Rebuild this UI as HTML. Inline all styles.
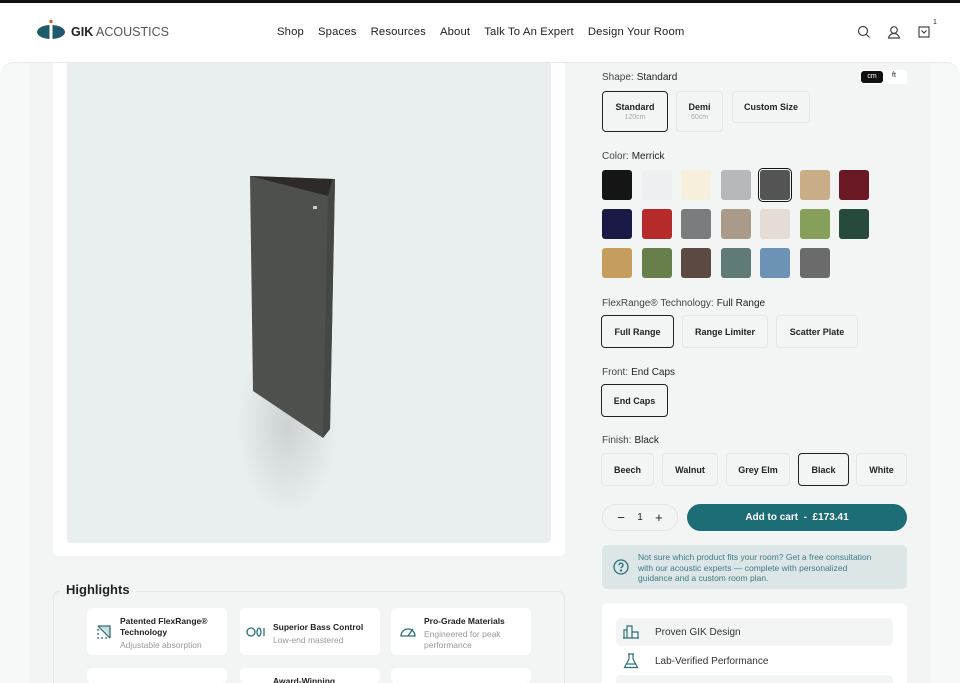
<!DOCTYPE html>
<html style="overflow:hidden;width:960px;height:683px"><head><meta charset="utf-8"><style>
*{box-sizing:border-box;margin:0;padding:0}
body{width:960px;height:683px;overflow:hidden;background:#fff;font-family:"Liberation Sans",sans-serif;color:#222;position:relative}
.a{position:absolute}
.nav span{margin-right:14px}
.btn{position:absolute;border:1px solid #e6e8e8;border-radius:4px;background:#f3f5f5;font-size:9px;font-weight:bold;text-align:center;display:flex;flex-direction:column;justify-content:center;align-items:center;color:#222}
.sel{border:1.5px solid #222}
.lbl{position:absolute;font-size:10px;color:#444}
.lbl b{color:#222;font-weight:normal;margin-left:3px}
.sw{position:absolute;width:30px;height:30px;border-radius:3px}
.hi{position:absolute;background:#fff;border-radius:5px;width:140px;height:47px}
.hi .t{position:absolute;left:33px;font-size:8.5px;font-weight:bold;color:#222;line-height:11px}
.hi .s{position:absolute;left:33px;font-size:8.5px;color:#999;line-height:11px}
</style></head><body>
<div class="a" style="left:0;top:0;width:960px;height:3px;background:#111"></div>
<svg class="a" style="left:36px;top:19px" width="34" height="22" viewBox="0 0 34 22"><ellipse cx="15" cy="13" rx="14" ry="7" fill="#1f5a6b"/><rect x="13.5" y="5" width="3" height="17" fill="#fff"/><circle cx="15" cy="2.5" r="1.7" fill="#c4662a"/></svg>
<div class="a" style="left:71px;top:25px;font-size:12.5px;color:#333"><b style="color:#222">GIK</b> <span style="color:#555">ACOUSTICS</span></div>
<div class="a nav" style="left:277px;top:26px;font-size:11.3px;color:#222;white-space:nowrap;letter-spacing:0.15px"><span>Shop</span><span>Spaces</span><span>Resources</span><span>About</span><span>Talk To An Expert</span><span>Design Your Room</span></div>
<svg class="a" style="left:856px;top:25px" width="80" height="16" viewBox="0 0 80 16" fill="none" stroke="#444" stroke-width="1.2"><circle cx="7" cy="6" r="4.5"/><path d="M10.5 9.5l3 3"/><circle cx="38" cy="5" r="3.3"/><path d="M32.5 13c1-3.5 3-4.5 5.5-4.5s4.5 1 5.5 4.5z"/><rect x="63" y="2" width="10" height="10"/><path d="M65.5 5.5l2.5 2.5 2.5-2.5"/></svg>
<div class="a" style="left:933px;top:19px;font-size:7px">1</div>
<div class="a" style="left:0;top:62px;width:960px;height:621px;background:#f7f8f8;border-radius:14px 14px 0 0;border-top:1px solid #e8eaea"></div>
<div class="a" style="left:29px;top:63px;width:902px;height:620px;background:#f3f5f5"></div>
<div class="a" style="left:53px;top:63px;width:512px;height:493px;background:#fff;border-radius:0 0 5px 5px"></div>
<div class="a" style="left:67px;top:63px;width:484px;height:480px;background:#e9eeee;border-radius:0 0 4px 4px;overflow:hidden">
<div class="a" style="left:165px;top:310px;width:110px;height:150px;background:radial-gradient(ellipse at 50% 35%,rgba(0,0,0,0.12),rgba(0,0,0,0) 65%)"></div>
<svg class="a" style="left:183px;top:113px" width="90" height="262" viewBox="0 0 90 262"><polygon points="0,0 83,3 85,3 80,253 73,262 3,215" fill="#4e504d"/><polygon points="73,262 80,253 85,3 78,20" fill="#454744"/><polygon points="0,0 83,3 78,20" fill="#2e2a2a"/><rect x="63" y="30" width="4" height="3" fill="#ccc"/></svg>
</div>
<div class="a" style="left:53px;top:591px;width:512px;height:100px;border:1px solid #e4e7e7;border-radius:6px"></div>
<div class="a" style="left:60px;top:582px;background:#f3f5f5;padding:0 6px;font-size:13px;font-weight:bold;color:#222">Highlights</div>
<div class="hi" style="left:87px;top:608px"><svg class="a" style="left:9px;top:16px" width="16" height="16" viewBox="0 0 16 16" fill="none" stroke="#2a6f79" stroke-width="1.3"><path d="M2 2h12v12" /><path d="M2 2l12 12" /><path d="M2 5v9h9" stroke-dasharray="2 2"/><path d="M4 2l10 10V2z" fill="#2a6f79" opacity=".25" stroke="none"/></svg><div class="t" style="top:8px">Patented FlexRange®<br>Technology</div><div class="s" style="top:32px">Adjustable absorption</div></div>
<div class="hi" style="left:240px;top:608px"><svg class="a" style="left:6px;top:18px" width="20" height="12" viewBox="0 0 20 12" fill="none" stroke="#2a6f79" stroke-width="1.3"><circle cx="5" cy="6" r="4"/><ellipse cx="13" cy="6" rx="2" ry="4"/><path d="M18 2v8"/></svg><div class="t" style="top:14px">Superior Bass Control</div><div class="s" style="top:27px">Low-end mastered</div></div>
<div class="hi" style="left:391px;top:608px"><svg class="a" style="left:8px;top:16px" width="18" height="14" viewBox="0 0 18 14" fill="none" stroke="#2a6f79" stroke-width="1.3"><path d="M2 12A7 7 0 0 1 16 12z"/><path d="M9 12l5-7"/></svg><div class="t" style="top:8px">Pro-Grade Materials</div><div class="s" style="top:21px">Engineered for peak<br>performance</div></div>
<div class="hi" style="left:87px;top:668px;height:15px"></div>
<div class="hi" style="left:240px;top:668px;height:15px"><div class="t" style="top:8px">Award-Winning</div></div>
<div class="hi" style="left:391px;top:668px;height:15px"></div>
<div class="lbl" style="left:602px;top:72px">Shape:<b>Standard</b></div>
<div class="a" style="left:860px;top:70px;width:47px;height:14px;background:#fff;border-radius:3px"></div>
<div class="a" style="left:861px;top:71px;width:22px;height:12px;background:#111;border-radius:3px;color:#fff;font-size:7px;text-align:center;line-height:12px">cm</div>
<div class="a" style="left:892px;top:72px;font-size:7px">ft</div>
<div class="btn sel" style="left:602px;top:91px;width:66px;height:41px">Standard<span style="font-weight:normal;color:#aaa;font-size:7px;margin-top:2px">120cm</span></div>
<div class="btn" style="left:676px;top:91px;width:47px;height:41px">Demi<span style="font-weight:normal;color:#aaa;font-size:7px;margin-top:2px">60cm</span></div>
<div class="btn" style="left:732px;top:91px;width:78px;height:32px">Custom Size</div>
<div class="lbl" style="left:602px;top:151px">Color:<b>Merrick</b></div>
<div class="sw" style="left:602px;top:170px;background:#151515"></div>
<div class="sw" style="left:642px;top:170px;background:#eeeff0"></div>
<div class="sw" style="left:681px;top:170px;background:#f6efdb"></div>
<div class="sw" style="left:721px;top:170px;background:#b7b8bb"></div>
<div class="sw" style="left:760px;top:170px;background:#545454;outline:1.5px solid #111;outline-offset:1px"></div>
<div class="sw" style="left:800px;top:170px;background:#c8ad86"></div>
<div class="sw" style="left:839px;top:170px;background:#6a1823"></div>
<div class="sw" style="left:602px;top:209px;background:#181a45"></div>
<div class="sw" style="left:642px;top:209px;background:#b72a2a"></div>
<div class="sw" style="left:681px;top:209px;background:#7b7c7e"></div>
<div class="sw" style="left:721px;top:209px;background:#a99a89"></div>
<div class="sw" style="left:760px;top:209px;background:#e6dcd6"></div>
<div class="sw" style="left:800px;top:209px;background:#869f5a"></div>
<div class="sw" style="left:839px;top:209px;background:#264b3d"></div>
<div class="sw" style="left:602px;top:248px;background:#c59d5c"></div>
<div class="sw" style="left:642px;top:248px;background:#687f4c"></div>
<div class="sw" style="left:681px;top:248px;background:#5c4a42"></div>
<div class="sw" style="left:721px;top:248px;background:#5f7a77"></div>
<div class="sw" style="left:760px;top:248px;background:#6c93b6"></div>
<div class="sw" style="left:800px;top:248px;background:#6b6b6b"></div>
<div class="lbl" style="left:602px;top:298px">FlexRange® Technology:<b>Full Range</b></div>
<div class="btn sel" style="left:601px;top:315px;width:73px;height:33px">Full Range</div>
<div class="btn" style="left:682px;top:315px;width:86px;height:33px">Range Limiter</div>
<div class="btn" style="left:776px;top:315px;width:82px;height:33px">Scatter Plate</div>
<div class="lbl" style="left:602px;top:367px">Front:<b>End Caps</b></div>
<div class="btn sel" style="left:601px;top:384px;width:67px;height:33px">End Caps</div>
<div class="lbl" style="left:602px;top:435px">Finish:<b>Black</b></div>
<div class="btn" style="left:601px;top:453px;width:53px;height:33px">Beech</div>
<div class="btn" style="left:662px;top:453px;width:56px;height:33px">Walnut</div>
<div class="btn" style="left:726px;top:453px;width:64px;height:33px">Grey Elm</div>
<div class="btn sel" style="left:798px;top:453px;width:51px;height:33px">Black</div>
<div class="btn" style="left:856px;top:453px;width:51px;height:33px">White</div>
<div class="a" style="left:602px;top:504px;width:76px;height:27px;border:1px solid #e3e5e5;border-radius:14px;font-size:10px;display:flex;justify-content:space-around;align-items:center;padding:0 8px"><span style="font-size:13px">−</span><span>1</span><span style="font-size:13px">+</span></div>
<div class="a" style="left:687px;top:504px;width:220px;height:27px;background:#1d6d77;border-radius:14px;color:#fff;font-size:10px;font-weight:bold;text-align:center;line-height:27px">Add to cart &nbsp;-&nbsp; £173.41</div>
<div class="a" style="left:602px;top:545px;width:305px;height:44px;background:#dce6e7;border-radius:5px"></div>
<svg class="a" style="left:613px;top:559px" width="16" height="16" viewBox="0 0 16 16" fill="none" stroke="#2a6f79" stroke-width="1.3"><circle cx="8" cy="8" r="7"/><path d="M6 6.2a2 2 0 1 1 2.8 1.8c-.6.3-.8.7-.8 1.3"/><circle cx="8" cy="11.5" r=".5" fill="#2a6f79"/></svg>
<div class="a" style="left:638px;top:552px;font-size:8.5px;color:#3e7c84;line-height:10.5px;width:236px">Not sure which product fits your room? Get a free consultation with our acoustic experts — complete with personalized guidance and a custom room plan.</div>
<div class="a" style="left:602px;top:603px;width:305px;height:80px;background:#fff;border-radius:6px 6px 0 0"></div>
<div class="a" style="left:616px;top:618px;width:277px;height:28px;background:#f3f5f5;border-radius:5px"></div>
<div class="a" style="left:616px;top:675px;width:277px;height:8px;background:#f3f5f5;border-radius:5px 5px 0 0"></div>
<svg class="a" style="left:622px;top:625px" width="18" height="14" viewBox="0 0 18 14" fill="none" stroke="#2a6f79" stroke-width="1.2"><path d="M1 13h16M2 13V5h3v8M5 13V1h5v12M10 13V7h6v6"/></svg>
<div class="a" style="left:655px;top:627px;font-size:10px;color:#333">Proven GIK Design</div>
<svg class="a" style="left:623px;top:653px" width="16" height="16" viewBox="0 0 16 16" fill="none" stroke="#2a6f79" stroke-width="1.2"><path d="M5 1h6M6 1v5L1.5 14.5h13L10 6V1"/><path d="M3.5 11h9"/></svg>
<div class="a" style="left:655px;top:656px;font-size:10px;color:#333">Lab-Verified Performance</div>
</body></html>
